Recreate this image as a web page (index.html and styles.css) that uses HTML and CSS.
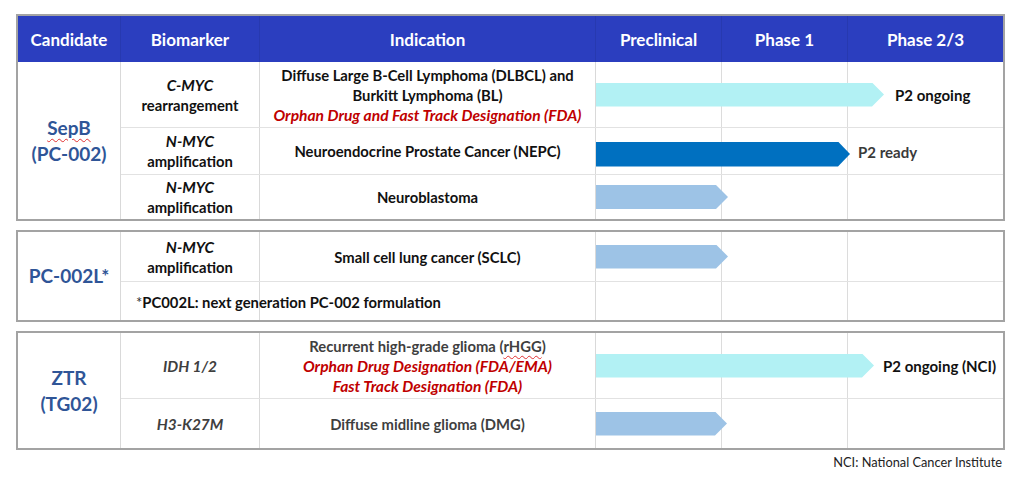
FILE: index.html
```html
<!DOCTYPE html>
<html>
<head>
<meta charset="utf-8">
<link rel="stylesheet" href="styles.css">
</head>
<body>
<div class="page">
  <section class="table">
    <div class="head">
      <div class="h c-cand">Candidate</div>
      <div class="h c-bio">Biomarker</div>
      <div class="h c-ind">Indication</div>
      <div class="h c-ph">Preclinical</div>
      <div class="h c-ph">Phase 1</div>
      <div class="h c-ph3">Phase 2/3</div>
    </div>
    <div class="body">
      <div class="cand"><div><span class="spell">SepB</span><br>(PC-002)</div></div>
      <div class="rows">
        <div class="row h65">
          <div class="bio"><div><i>C-MYC</i><br>rearrangement</div></div>
          <div class="ind"><div>Diffuse Large B-Cell Lymphoma (DLBCL) and<br>Burkitt Lymphoma (BL)<br><i class="red">Orphan Drug and Fast Track Designation (FDA)</i></div></div>
          <div class="phase">
            <div class="arrow cyan" style="width:288px"></div>
            <span class="label">P2 ongoing</span>
          </div>
        </div>
        <div class="row h47">
          <div class="bio"><div><i>N-MYC</i><br>amplification</div></div>
          <div class="ind"><div>Neuroendocrine Prostate Cancer (NEPC)</div></div>
          <div class="phase">
            <div class="arrow dark low" style="width:254px"></div>
            <span class="label gray tight">P2 ready</span>
          </div>
        </div>
        <div class="row h45">
          <div class="bio"><div><i>N-MYC</i><br>amplification</div></div>
          <div class="ind"><div>Neuroblastoma</div></div>
          <div class="phase">
            <div class="arrow light" style="width:132px"></div>
          </div>
        </div>
      </div>
    </div>
  </section>

  <section class="table">
    <div class="body">
      <div class="cand"><div>PC-002L*</div></div>
      <div class="rows">
        <div class="row h49">
          <div class="bio"><div><i>N-MYC</i><br>amplification</div></div>
          <div class="ind"><div>Small cell lung cancer (SCLC)</div></div>
          <div class="phase">
            <div class="arrow light" style="width:132px"></div>
          </div>
        </div>
        <div class="row h39">
          <div class="bio note"><div><span class="star">*</span>PC002L: next generation PC-002 formulation</div></div>
          <div class="ind"></div>
          <div class="phase"></div>
        </div>
      </div>
    </div>
  </section>

  <section class="table muted">
    <div class="body">
      <div class="cand"><div>ZTR<br>(TG02)</div></div>
      <div class="rows">
        <div class="row h65">
          <div class="bio"><div><i>IDH 1/2</i></div></div>
          <div class="ind"><div>Recurrent high-grade glioma (<span class="spell">rHGG</span>)<br><i class="red">Orphan Drug Designation (FDA/EMA)</i><br><i class="red">Fast Track Designation (FDA)</i></div></div>
          <div class="phase">
            <div class="arrow cyan" style="width:278px"></div>
            <span class="label dark-text">P2 ongoing (NCI)</span>
          </div>
        </div>
        <div class="row h50">
          <div class="bio"><div><i>H3-K27M</i></div></div>
          <div class="ind"><div>Diffuse midline glioma (DMG)</div></div>
          <div class="phase">
            <div class="arrow light" style="width:131px"></div>
          </div>
        </div>
      </div>
    </div>
  </section>

  <div class="foot">NCI: National Cancer Institute</div>
</div>
</body>
</html>
```

FILE: styles.css
```css
html, body {
  margin: 0;
  padding: 0;
  background: #ffffff;
}

body {
  font-family: Lato, "Open Sans", Arial, sans-serif;
  color: #111111;
}

.page {
  padding: 14px 0 0 16px;
  width: 989px;
}

.table {
  width: 989px;
  box-sizing: border-box;
  border: 2px solid #a3a3a3;
  margin-bottom: 9px;
  display: flex;
  flex-direction: column;
}

.head {
  display: flex;
  height: 46px;
  background: #2b3ebf;
  color: #ffffff;
  font-weight: 700;
  font-size: 17px;
}

.h {
  display: flex;
  align-items: center;
  justify-content: center;
  box-sizing: border-box;
  border-right: 1px solid rgba(0, 0, 0, 0.08);
}

.c-cand { width: 103px; }
.c-bio { width: 139px; }
.c-ind { width: 336px; }
.c-ph { width: 126px; }
.c-ph3 { width: 155px; border-right: none; }

.body {
  display: flex;
}

.cand {
  width: 103px;
  box-sizing: border-box;
  border-right: 1px solid #d9d9d9;
  display: flex;
  align-items: center;
  justify-content: center;
  text-align: center;
  color: #2f5597;
  font-weight: 700;
  font-size: 19px;
  line-height: 26px;
}

.rows {
  display: flex;
  flex-direction: column;
  width: 882px;
}

.row {
  display: flex;
  box-sizing: border-box;
}

.row + .row {
  border-top: 1px solid #e2e2e2;
}

.h65 { height: 65px; }
.h47 { height: 47px; }
.h45 { height: 45px; }
.h49 { height: 49px; }
.h39 { height: 39px; }
.h50 { height: 50px; }

.bio, .ind {
  box-sizing: border-box;
  border-right: 1px solid #d9d9d9;
  display: flex;
  align-items: center;
  justify-content: center;
  text-align: center;
  font-weight: 700;
  font-size: 14.8px;
  line-height: 20px;
}

.bio { width: 139px; }
.ind { width: 336px; }

.bio i, .ind i { font-style: italic; }

.bio i { font-size: 15.4px; }

.red {
  color: #c00000;
  font-size: 15.6px;
}

.bio.note {
  justify-content: flex-start;
  padding-left: 15px;
  white-space: nowrap;
  text-align: left;
  position: relative;
  z-index: 1;
  padding-top: 2px;
}

.star {
  font-weight: 400;
  color: #333333;
}

.phase {
  width: 407px;
  display: flex;
  align-items: center;
  background-image: linear-gradient(#dcdcdc, #dcdcdc), linear-gradient(#dcdcdc, #dcdcdc);
  background-size: 1px 100%, 1px 100%;
  background-position: 125px 0, 251px 0;
  background-repeat: no-repeat;
}

.arrow {
  height: 24px;
  flex: none;
  clip-path: polygon(0 0, calc(100% - 12px) 0, 100% 50%, calc(100% - 12px) 100%, 0 100%);
}

.arrow.low { margin-top: 6px; height: 25px; }

.cyan { background: #b2f1f4; }
.dark { background: #0070c0; }
.light { background: #9dc3e6; }

.label {
  margin-left: 11px;
  font-weight: 700;
  font-size: 15px;
  white-space: nowrap;
  color: #111111;
}

.label.tight { margin-left: 8px; margin-top: 2px; }
.label.gray { color: #3a3a3a; }
.label.dark-text { margin-left: 9px; color: #111111; }

.muted .bio, .muted .ind { color: #3f3f3f; }
.muted .ind .red { color: #c00000; }

.spell {
  text-decoration: underline wavy #e03030;
  text-decoration-thickness: 1px;
  text-underline-offset: 3px;
}

.foot {
  text-align: right;
  padding-right: 3px;
  margin-top: -5px;
  font-size: 12.8px;
  line-height: 16px;
  color: #222222;
}
```
